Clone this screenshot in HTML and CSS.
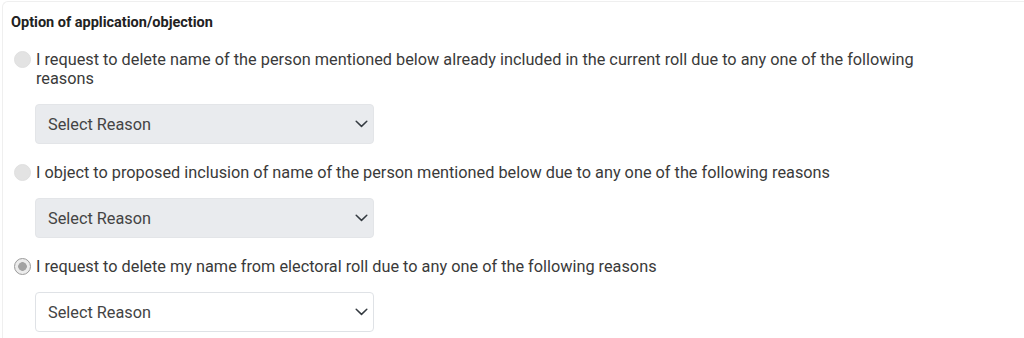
FILE: index.html
```html
<!DOCTYPE html>
<html lang="en">
  <head>
    <meta charset="utf-8">
    <meta name="viewport" content="width=device-width, initial-scale=1">
    <title>Option of application/objection</title>
    <link rel="stylesheet" href="styles.css">
  </head>

  <body>
    <div class="card">
      <div class="card-title">Option of application/objection</div>

      <div class="option">
        <label class="option-label">
          <input type="radio" name="option" disabled>
          <span>I request to delete name of the person mentioned below already included in the current roll due to any one of the following reasons</span>
        </label>
        <div class="select-wrap">
          <select class="reason" disabled>
            <option>Select Reason</option>
          </select>
          <svg class="chevron" width="13" height="8" viewBox="0 0 13 8"><path d="M1.2 1.3 6.5 6.4l5.3-5.1" fill="none" stroke="#343a40" stroke-width="1.5" stroke-linecap="round" stroke-linejoin="round"/></svg>
        </div>
      </div>

      <div class="option">
        <label class="option-label">
          <input type="radio" name="option" disabled>
          <span>I object to proposed inclusion of name of the person mentioned below due to any one of the following reasons</span>
        </label>
        <div class="select-wrap">
          <select class="reason" disabled>
            <option>Select Reason</option>
          </select>
          <svg class="chevron" width="13" height="8" viewBox="0 0 13 8"><path d="M1.2 1.3 6.5 6.4l5.3-5.1" fill="none" stroke="#343a40" stroke-width="1.5" stroke-linecap="round" stroke-linejoin="round"/></svg>
        </div>
      </div>

      <div class="option">
        <label class="option-label">
          <input type="radio" name="option" checked disabled>
          <span>I request to delete my name from electoral roll due to any one of the following reasons</span>
        </label>
        <div class="select-wrap">
          <select class="reason">
            <option>Select Reason</option>
          </select>
          <svg class="chevron" width="13" height="8" viewBox="0 0 13 8"><path d="M1.2 1.3 6.5 6.4l5.3-5.1" fill="none" stroke="#343a40" stroke-width="1.5" stroke-linecap="round" stroke-linejoin="round"/></svg>
        </div>
      </div>
    </div>
  </body>
</html>
```

FILE: styles.css
```css
body {
  margin: 0;
  background: #fff;
  font-family: Roboto, "Liberation Sans", Arial, sans-serif;
  color: #3a3a3a;
  overflow: hidden;
}
.card {
  margin: 1px 0 0 2px;
  padding: 13px 0 20px 8px;
  border: 1px solid #efefef;
  border-right: none;
  border-radius: 6px 0 0 0;
  min-height: 400px;
}
.card-title {
  font-size: 14.5px;
  font-weight: 700;
  line-height: 16px;
  color: #222;
  margin-bottom: 19px;
}
.option {
  margin-bottom: 19px;
}
.option-label {
  display: flex;
  align-items: flex-start;
  gap: 5px;
  font-size: 16.3px;
  line-height: 19px;
  max-width: 910px;
  margin-left: 2px;
}
.option-label input {
  appearance: none;
  -webkit-appearance: none;
  flex-shrink: 0;
  width: 17px;
  height: 17px;
  margin: 1px 0 0 1px;
  border-radius: 50%;
  background: #e3e3e3;
  border: 1px solid #e0e0e0;
}
.option-label input:checked {
  border: 1.5px solid #9a9a9a;
  background: radial-gradient(circle, #a3a3a3 0 4px, #ececec 4.6px);
}
.select-wrap {
  position: relative;
  width: 339px;
  margin: 16px 0 0 24px;
}
.reason {
  appearance: none;
  -webkit-appearance: none;
  display: block;
  width: 100%;
  height: 40px;
  padding: 0 12px;
  font-family: inherit;
  font-size: 16.3px;
  color: #444;
  background: #fff;
  border: 1px solid #dfe2e6;
  border-radius: 4px;
  opacity: 1;
}
.reason:disabled {
  background: #e9ebee;
  border-color: #e3e5e8;
}
.chevron {
  position: absolute;
  right: 6px;
  top: 16px;
  pointer-events: none;
}
```
